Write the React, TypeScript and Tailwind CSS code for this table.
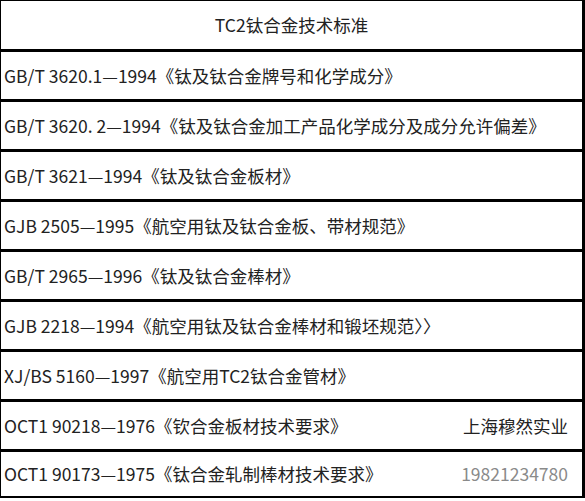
import React from "react";

const rows: { left: string; right?: string; faint?: boolean }[] = [
  { left: "GB/T 3620.1—1994《钛及钛合金牌号和化学成分》" },
  { left: "GB/T 3620. 2—1994《钛及钛合金加工产品化学成分及成分允许偏差》" },
  { left: "GB/T 3621—1994《钛及钛合金板材》" },
  { left: "GJB 2505—1995《航空用钛及钛合金板、带材规范》" },
  { left: "GB/T 2965—1996《钛及钛合金棒材》" },
  { left: "GJB 2218—1994《航空用钛及钛合金棒材和锻坯规范〉〉" },
  { left: "XJ/BS 5160—1997《航空用TC2钛合金管材》" },
  { left: "OCT1 90218—1976《钦合金板材技术要求》", right: "上海穆然实业" },
  { left: "OCT1 90173—1975《钛合金轧制棒材技术要求》", right: "19821234780", faint: true },
];

export default function App() {
  return (
    <div
      className="w-[585px] h-[501px] bg-white text-[#222222] text-[17.5px] leading-none"
      style={{ fontFamily: '"Noto Sans CJK SC", "Noto Sans", sans-serif' }}
    >
      <div className="w-[585px] border-l border-t border-r-[3px] border-b-2 border-black flex flex-col">
        <div className="h-[48px] flex items-center justify-center">TC2钛合金技术标准</div>
        {rows.map((r, i) => (
          <div
            key={i}
            className={`border-t-[3px] border-black flex items-center justify-between pl-[3px] pr-[14px] ${
              i === rows.length - 1 ? "h-[47px]" : "h-[50px]"
            }`}
          >
            <span className="whitespace-nowrap">{r.left}</span>
            {r.right && (
              <span className={`whitespace-nowrap ${r.faint ? "text-[#8a8a8a]" : ""}`}>{r.right}</span>
            )}
          </div>
        ))}
      </div>
    </div>
  );
}
